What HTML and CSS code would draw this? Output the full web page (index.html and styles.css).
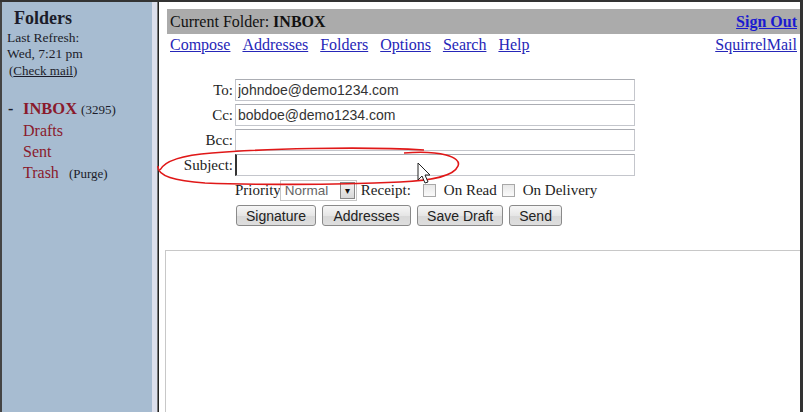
FILE: index.html
```html
<!DOCTYPE html>
<html lang="en">
<head>
  <meta charset="UTF-8">
  <title>SquirrelMail - Compose</title>
  <link rel="stylesheet" href="styles.css">
</head>
<body>
  <div class="frames">
    <div class="left">
      <div class="folders-title">Folders</div>
      <div class="refresh">Last Refresh:<br>Wed, 7:21 pm</div>
      <div class="check">(<a href="#">Check mail</a>)</div>

      <ul class="folder-list">
        <li><span class="dash">-</span><a href="#" class="inbox">INBOX</a> <small>(3295)</small></li>
        <li><a href="#">Drafts</a></li>
        <li><a href="#">Sent</a></li>
        <li><a href="#">Trash</a> <small class="purge">(<a href="#">Purge</a>)</small></li>
      </ul>
    </div>

    <div class="divider"></div>

    <div class="right">
      <div class="bar">
        <span>Current Folder: <b>INBOX</b></span>
        <a href="#" class="signout">Sign Out</a>
      </div>
      <div class="nav">
        <div class="nav-links">
          <a href="#">Compose</a>
          <a href="#">Addresses</a>
          <a href="#">Folders</a>
          <a href="#">Options</a>
          <a href="#">Search</a>
          <a href="#">Help</a>
        </div>
        <a href="#">SquirrelMail</a>
      </div>

      <form class="compose">
        <label>To:</label>
        <input class="field" value="johndoe@demo1234.com">
        <label>Cc:</label>
        <input class="field" value="bobdoe@demo1234.com">
        <label>Bcc:</label>
        <input class="field">
        <label>Subject:</label>
        <input class="field subject">

        <div class="options">
          <span>Priority</span>
          <div class="select"><span>Normal</span><span class="arrow">&#9662;</span></div>
          <span class="receipt">Receipt:</span>
          <span class="check-box"></span><span>On Read</span>
          <span class="check-box"></span><span>On Delivery</span>
        </div>

        <div class="buttons">
          <button type="button">Signature</button>
          <button type="button" class="wide">Addresses</button>
          <button type="button">Save Draft</button>
          <button type="button">Send</button>
        </div>
      </form>

      <textarea class="body-text"></textarea>
    </div>
  </div>

  <!-- hand drawn marker and mouse pointer from the recording -->
  <svg class="overlay" width="803" height="412" viewBox="0 0 803 412">
    <path d="M 160 170 C 165 160 185 155 212 153 C 260 149 360 146 424 150 M 404 153 C 440 150 462 157 458 166 C 454 176 430 181 400 182 C 330 185 250 185 205 183 C 175 181 157 176 158 166"
          fill="none" stroke="#e01818" stroke-width="1.6"/>
    <polygon points="418,163 418,180 422,176 425,183 428,182 425,175 430,175" fill="#fff" stroke="#222" stroke-width="1"/>
  </svg>
</body>
</html>
```

FILE: styles.css
```css
html, body {
  margin: 0;
  padding: 0;
}

body {
  width: 803px;
  height: 412px;
  overflow: hidden;
  font-family: "Liberation Serif", "Times New Roman", serif;
  color: #222;
  position: relative;
}

.frames {
  display: flex;
  height: 410px;
  border-top: 2px solid #333;
}

.left {
  width: 145px;
  padding: 0 0 0 5px;
  background: #a7bcd1;
  border-left: 2px solid #444;
  color: #1c1c2a;
}

.folders-title {
  font-size: 18px;
  font-weight: bold;
  margin: 6px 0 0 7px;
  line-height: 20px;
}

.refresh {
  font-size: 13.5px;
  line-height: 16px;
  margin-top: 2px;
}

.check {
  font-size: 13px;
  line-height: 16px;
  margin: 1px 0 0 2px;
}

.check a {
  color: #1c1c2a;
}

.folder-list {
  list-style: none;
  margin: 19px 0 0;
  padding: 0;
}

.folder-list li {
  font-size: 16px;
  line-height: 21px;
  padding-left: 16px;
  position: relative;
}

.folder-list a {
  color: #8a1a2c;
  text-decoration: none;
}

.folder-list .inbox {
  font-weight: bold;
  font-size: 16.5px;
}

.dash {
  position: absolute;
  left: 1px;
  font-weight: bold;
}

.folder-list small {
  font-size: 13px;
  color: #1c1c2a;
}

.folder-list .purge a {
  color: #1c1c2a;
}

.purge {
  margin-left: 6px;
}

.divider {
  width: 9px;
  background: linear-gradient(to right, #dcdfec 0 5px, #777 5px 6px, #222 6px 7px, #fff 7px);
}

.right {
  width: 633px;
  padding: 7px 0 0 6px;
  background: #fff;
  border-right: 3px solid #333;
  overflow: hidden;
}

.bar {
  display: flex;
  justify-content: space-between;
  align-items: center;
  height: 25px;
  padding: 0 3px;
  background: #ababab;
  font-size: 16px;
  color: #111;
}

a {
  color: #2626b8;
}

.signout {
  font-weight: bold;
  color: #1a1ad0;
}

.nav {
  display: flex;
  justify-content: space-between;
  padding: 2px 3px 0;
  font-size: 16px;
  line-height: 18px;
}

.nav-links {
  display: flex;
  gap: 12px;
}

.compose {
  display: grid;
  grid-template-columns: 66px 400px;
  column-gap: 2px;
  row-gap: 3px;
  margin-top: 25px;
}

.compose label {
  font-size: 15px;
  text-align: right;
  line-height: 22px;
  color: #222;
}

.field {
  height: 22px;
  box-sizing: border-box;
  border: 1px solid #c4c6cc;
  border-top-color: #abadb3;
  padding: 0 2px;
  font-family: "Liberation Sans", Arial, sans-serif;
  font-size: 14px;
  color: #333;
  margin: 0;
}

.subject {
  border-left: 2px solid #333;
}

.options {
  grid-column: 2;
  display: flex;
  align-items: center;
  height: 21px;
  margin-top: 1px;
  font-size: 15px;
  color: #222;
}

.select {
  display: flex;
  align-items: center;
  justify-content: space-between;
  width: 77px;
  height: 21px;
  box-sizing: border-box;
  margin-left: -1px;
  border: 1px solid #c6c6c6;
  padding: 0 1px 0 4px;
  font-family: "Liberation Sans", Arial, sans-serif;
  font-size: 13.5px;
  color: #666;
}

.arrow {
  width: 15px;
  height: 17px;
  box-sizing: border-box;
  border: 1px solid #888;
  background: linear-gradient(#f3f3f3, #d8d8d8);
  font-size: 10px;
  line-height: 15px;
  text-align: center;
  color: #111;
}

.receipt {
  margin: 0 12px 0 4px;
}

.check-box {
  width: 11px;
  height: 11px;
  border: 1px solid #a8a8a8;
  background: linear-gradient(#e8e8e8, #fafafa);
  margin-right: 8px;
}

.check-box + span {
  margin-right: 5px;
}

.buttons {
  grid-column: 2;
  display: flex;
  gap: 6px;
  margin-top: 1px;
  margin-left: 1px;
}

.buttons button {
  height: 21px;
  padding: 0 9px;
  border: 1px solid #8a8a8a;
  border-radius: 3px;
  background: linear-gradient(#f6f6f6 0, #e6e6e6 50%, #d8d8d8 51%, #dedede 100%);
  font-family: "Liberation Sans", Arial, sans-serif;
  font-size: 14px;
  color: #222;
}

.buttons .wide {
  padding: 0 10.5px;
}

.body-text {
  display: block;
  width: 660px;
  height: 200px;
  margin: 24px 0 0 -2px;
  border: 1px solid #c8c8c8;
  border-right: none;
  resize: none;
}

.overlay {
  position: absolute;
  left: 0;
  top: 0;
  pointer-events: none;
}
```
